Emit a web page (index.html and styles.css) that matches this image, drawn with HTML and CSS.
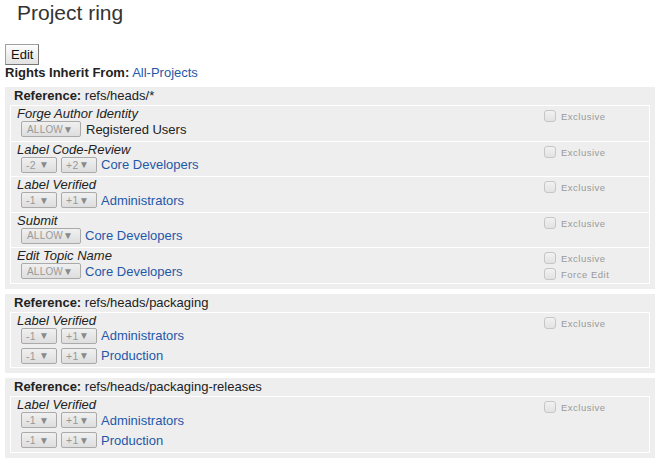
FILE: index.html
```html
<!DOCTYPE html>
<html>
<head>
<meta charset="utf-8">
<link rel="stylesheet" href="styles.css">
</head>
<body>
<h1 class="title">Project ring</h1>
<button class="edit-btn">Edit</button>
<div class="inherit"><b>Rights Inherit From:</b> <a class="link" href="#">All-Projects</a></div>

<div class="section">
  <div class="ref-head"><b>Reference:</b> refs/heads/*</div>
  <div class="perms">
    <div class="perm">
      <div class="perm-main">
        <div class="perm-label">Forge Author Identity</div>
        <div class="rule"><span class="sel sel-wide"><span>ALLOW</span><span class="arr">▼</span></span><span class="group">Registered Users</span></div>
      </div>
      <div class="perm-opts"><div class="opt"><span class="cb"></span><span class="opt-txt">Exclusive</span></div></div>
    </div>
    <div class="perm">
      <div class="perm-main">
        <div class="perm-label">Label Code-Review</div>
        <div class="rule"><span class="sel"><span>-2</span><span class="arr">▼</span></span><span class="sel"><span>+2</span><span class="arr">▼</span></span><a class="link" href="#">Core Developers</a></div>
      </div>
      <div class="perm-opts"><div class="opt"><span class="cb"></span><span class="opt-txt">Exclusive</span></div></div>
    </div>
    <div class="perm">
      <div class="perm-main">
        <div class="perm-label">Label Verified</div>
        <div class="rule"><span class="sel"><span>-1</span><span class="arr">▼</span></span><span class="sel"><span>+1</span><span class="arr">▼</span></span><a class="link" href="#">Administrators</a></div>
      </div>
      <div class="perm-opts"><div class="opt"><span class="cb"></span><span class="opt-txt">Exclusive</span></div></div>
    </div>
    <div class="perm">
      <div class="perm-main">
        <div class="perm-label">Submit</div>
        <div class="rule"><span class="sel sel-wide"><span>ALLOW</span><span class="arr">▼</span></span><a class="link" href="#">Core Developers</a></div>
      </div>
      <div class="perm-opts"><div class="opt"><span class="cb"></span><span class="opt-txt">Exclusive</span></div></div>
    </div>
    <div class="perm">
      <div class="perm-main">
        <div class="perm-label">Edit Topic Name</div>
        <div class="rule"><span class="sel sel-wide"><span>ALLOW</span><span class="arr">▼</span></span><a class="link" href="#">Core Developers</a></div>
      </div>
      <div class="perm-opts">
        <div class="opt"><span class="cb"></span><span class="opt-txt">Exclusive</span></div>
        <div class="opt"><span class="cb"></span><span class="opt-txt">Force Edit</span></div>
      </div>
    </div>
  </div>
</div>

<div class="section">
  <div class="ref-head"><b>Reference:</b> refs/heads/packaging</div>
  <div class="perms">
    <div class="perm">
      <div class="perm-main">
        <div class="perm-label">Label Verified</div>
        <div class="rule"><span class="sel"><span>-1</span><span class="arr">▼</span></span><span class="sel"><span>+1</span><span class="arr">▼</span></span><a class="link" href="#">Administrators</a></div>
        <div class="rule"><span class="sel"><span>-1</span><span class="arr">▼</span></span><span class="sel"><span>+1</span><span class="arr">▼</span></span><a class="link" href="#">Production</a></div>
      </div>
      <div class="perm-opts"><div class="opt"><span class="cb"></span><span class="opt-txt">Exclusive</span></div></div>
    </div>
  </div>
</div>

<div class="section">
  <div class="ref-head"><b>Reference:</b> refs/heads/packaging-releases</div>
  <div class="perms">
    <div class="perm">
      <div class="perm-main">
        <div class="perm-label">Label Verified</div>
        <div class="rule"><span class="sel"><span>-1</span><span class="arr">▼</span></span><span class="sel"><span>+1</span><span class="arr">▼</span></span><a class="link" href="#">Administrators</a></div>
        <div class="rule"><span class="sel"><span>-1</span><span class="arr">▼</span></span><span class="sel"><span>+1</span><span class="arr">▼</span></span><a class="link" href="#">Production</a></div>
      </div>
      <div class="perm-opts"><div class="opt"><span class="cb"></span><span class="opt-txt">Exclusive</span></div></div>
    </div>
  </div>
</div>
</body>
</html>
```
FILE: styles.css
```css
html, body {
  margin: 0;
  padding: 0;
  background: #fff;
}
body {
  padding: 0 6px 0 5px;
  font-family: "Liberation Sans", Arial, sans-serif;
  font-size: 13px;
  color: #222;
}
.title {
  margin: 1px 0 0 12px;
  font-size: 21px;
  line-height: 24px;
  font-weight: normal;
  color: #333;
}
.edit-btn {
  display: block;
  margin: 19px 0 0 0;
  height: 21px;
  padding: 0 5px;
  font-family: "Liberation Sans", Arial, sans-serif;
  font-size: 13px;
  color: #111;
  background: linear-gradient(#fdfdfd, #e2e2e2);
  border: 1px solid #a0a0a0;
  border-right-color: #777;
  border-bottom-color: #777;
  border-radius: 0;
}
.inherit {
  line-height: 15px;
}
.link {
  color: #1f58a8;
  text-decoration: none;
}
.section {
  background: #eee;
  margin-top: 7px;
  padding: 0 5px 5px 5px;
}
.section + .section {
  margin-top: 5px;
}
.ref-head {
  line-height: 16px;
  padding: 1px 0 0 4px;
  margin-bottom: 1px;
}
.perms {
  border: 1px solid #fff;
}
.perm {
  display: flex;
  padding: 0 0 0.5px 6px;
}
.perm + .perm {
  border-top: 1px solid #fff;
}
.perm-main {
  flex: 1;
}
.perm-label {
  font-style: italic;
  line-height: 14px;
  padding-top: 1px;
  margin-bottom: -1px;
}
.rule {
  display: flex;
  align-items: center;
  gap: 4px;
  height: 18px;
  margin: 0 0 2px 4px;
}
.group {
  margin-left: 1px;
}
.sel {
  display: inline-flex;
  align-items: center;
  justify-content: space-between;
  box-sizing: border-box;
  width: 36px;
  height: 16px;
  padding: 0 7px 0 4px;
  border: 1px solid #aaa;
  border-radius: 2px;
  background: linear-gradient(#f0f0f0, #dedede);
  color: #999;
  font-size: 10.5px;
  letter-spacing: 0.3px;
}
.sel-wide {
  width: 60px;
  padding: 0 8px 0 5px;
  font-size: 10px;
  letter-spacing: 0.2px;
}
.arr {
  font-size: 10px;
  color: #8a8a8a;
  letter-spacing: 0;
}
.perm-opts {
  width: 105px;
  padding-top: 1px;
}
.opt {
  display: flex;
  align-items: flex-end;
  height: 14px;
  margin-top: 1px;
}
.opt + .opt {
  margin-top: 2px;
}
.cb {
  display: inline-block;
  box-sizing: border-box;
  width: 12px;
  height: 12px;
  border: 1px solid #c6c6c6;
  border-radius: 3px;
  background: linear-gradient(#f2f2f2, #e2e2e2);
  margin-right: 5px;
}
.opt-txt {
  font-size: 9.5px;
  letter-spacing: 0.5px;
  color: #999;
  line-height: 10px;
}
```
